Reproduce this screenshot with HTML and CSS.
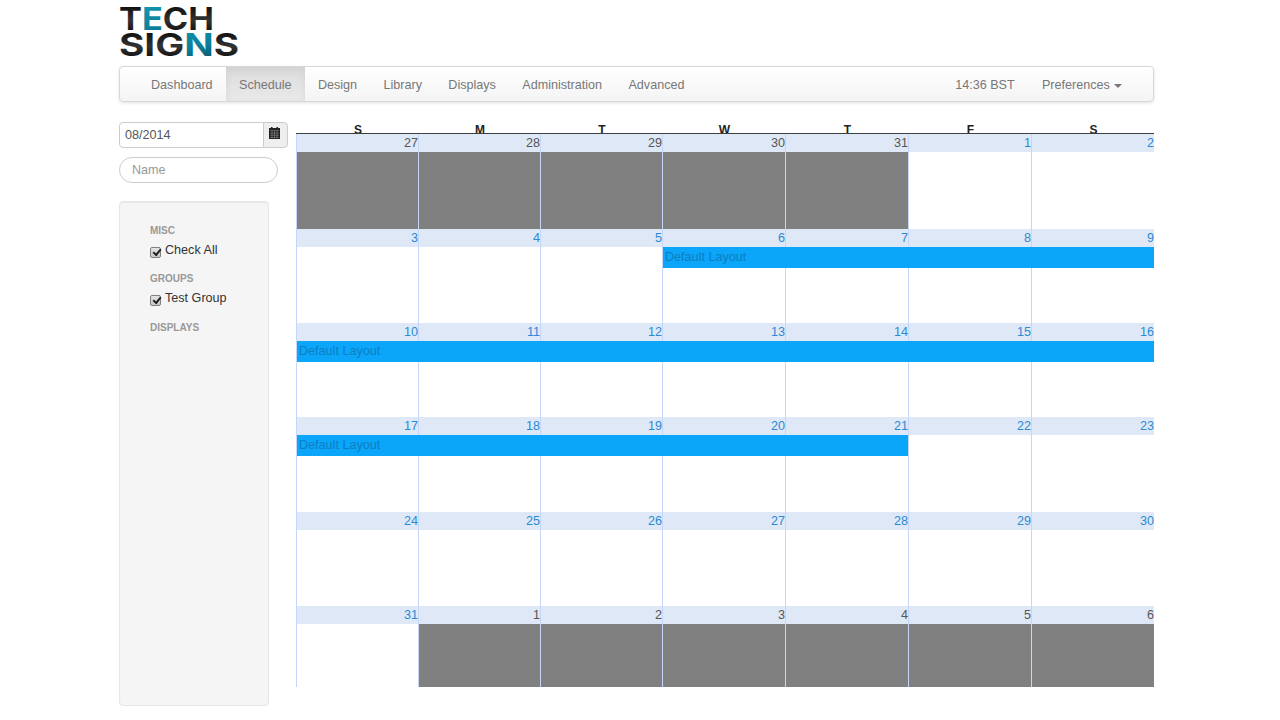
FILE: index.html
```html
<!DOCTYPE html>
<html lang="en">
<head>
<meta charset="utf-8">
<title>Schedule</title>
<link rel="stylesheet" href="styles.css">
</head>
<body>
<div class="page">
  <header class="brand">
    <svg class="logo" width="122" height="52" viewBox="0 0 122 52" role="img" aria-label="Tech Signs">
      <defs>
        <linearGradient id="dark" x1="0" y1="0" x2="0" y2="1"><stop offset="0" stop-color="#000"/><stop offset="0.55" stop-color="#333"/><stop offset="1" stop-color="#000"/></linearGradient>
        <linearGradient id="teal" x1="0" y1="0" x2="1" y2="1"><stop offset="0" stop-color="#12a3bd"/><stop offset="0.6" stop-color="#0d7f99"/><stop offset="1" stop-color="#0b3a4a"/></linearGradient>
      </defs>
      <text class="logo-text" x="0" y="23" textLength="95" lengthAdjust="spacingAndGlyphs" fill="url(#dark)">T<tspan fill="url(#teal)">E</tspan>CH</text>
      <text class="logo-text" x="0" y="49" textLength="120" lengthAdjust="spacingAndGlyphs" fill="url(#dark)">SIG<tspan fill="url(#teal)">N</tspan>S</text>
    </svg>
  </header>

  <nav class="navbar">
    <ul class="nav">
      <li>Dashboard</li>
      <li class="active">Schedule</li>
      <li>Design</li>
      <li>Library</li>
      <li>Displays</li>
      <li>Administration</li>
      <li>Advanced</li>
    </ul>
    <ul class="nav nav-right">
      <li>14:36 BST</li>
      <li>Preferences <span class="caret"></span></li>
    </ul>
  </nav>

  <main class="content">
    <aside class="sidebar">
      <div class="input-group">
        <input class="date-input" type="text" value="08/2014">
        <span class="addon">
          <svg width="11" height="12" viewBox="0 0 11 12" aria-hidden="true">
            <path class="cal-icon" d="M2 0h1.500v1h4V0H9v1h2v11H0V1h2z"/>
            <path class="cal-grid" d="M1 3.500h9M1 6h9M1 8.250h9M1 10.500h9M3 3.500V11M5.500 3.500V11M8 3.500V11"/>
          </svg>
        </span>
      </div>
      <input class="name-input" type="text" placeholder="Name">
      <section class="filter-panel">
        <h5>Misc</h5>
        <label class="check"><input type="checkbox" checked> Check All</label>
        <h5>Groups</h5>
        <label class="check"><input type="checkbox" checked> Test Group</label>
        <h5 class="displays">Displays</h5>
      </section>
    </aside>

    <section class="calendar">
      <div class="weekdays"><span>S</span><span>M</span><span>T</span><span>W</span><span>T</span><span>F</span><span>S</span></div>

      <div class="week tall">
        <div class="days">
          <div class="day other"><b>27</b></div><div class="day other"><b>28</b></div><div class="day other"><b>29</b></div><div class="day other"><b>30</b></div><div class="day other"><b>31</b></div><div class="day"><b>1</b></div><div class="day"><b>2</b></div>
        </div>
      </div>

      <div class="week">
        <div class="days">
          <div class="day"><b>3</b></div><div class="day"><b>4</b></div><div class="day"><b>5</b></div><div class="day"><b>6</b></div><div class="day"><b>7</b></div><div class="day"><b>8</b></div><div class="day"><b>9</b></div>
        </div>
        <div class="bars"><div class="bar from-4">Default Layout</div></div>
      </div>

      <div class="week">
        <div class="days">
          <div class="day"><b>10</b></div><div class="day"><b>11</b></div><div class="day"><b>12</b></div><div class="day"><b>13</b></div><div class="day"><b>14</b></div><div class="day"><b>15</b></div><div class="day"><b>16</b></div>
        </div>
        <div class="bars"><div class="bar all">Default Layout</div></div>
      </div>

      <div class="week tall">
        <div class="days">
          <div class="day"><b>17</b></div><div class="day"><b>18</b></div><div class="day"><b>19</b></div><div class="day"><b>20</b></div><div class="day"><b>21</b></div><div class="day"><b>22</b></div><div class="day"><b>23</b></div>
        </div>
        <div class="bars"><div class="bar to-5">Default Layout</div></div>
      </div>

      <div class="week">
        <div class="days">
          <div class="day"><b>24</b></div><div class="day"><b>25</b></div><div class="day"><b>26</b></div><div class="day"><b>27</b></div><div class="day"><b>28</b></div><div class="day"><b>29</b></div><div class="day"><b>30</b></div>
        </div>
      </div>

      <div class="week last">
        <div class="days">
          <div class="day"><b>31</b></div><div class="day other"><b>1</b></div><div class="day other"><b>2</b></div><div class="day other"><b>3</b></div><div class="day other"><b>4</b></div><div class="day other"><b>5</b></div><div class="day other"><b>6</b></div>
        </div>
      </div>
    </section>
  </main>
</div>
</body>
</html>
```

FILE: styles.css
```css
* { box-sizing: border-box; }

html, body { margin: 0; height: 100%; overflow: hidden; }

body {
  background: #fff;
  color: #333;
  font-family: "Liberation Sans", Arial, sans-serif;
  font-size: 12.6px;
  line-height: 1.43;
}

.page { width: 1035px; margin-left: 119px; }

.brand { height: 66px; padding-top: 7px; }
.logo { display: block; overflow: visible; }
.logo-text { font-family: Inter, "Liberation Sans", sans-serif; font-weight: 700; font-size: 31px; }

.navbar {
  display: flex;
  justify-content: space-between;
  height: 36px;
  padding: 0 19px 0 17.8px;
  border: 1px solid #d8d8d8;
  border-radius: 4px;
  background: linear-gradient(to bottom, #fff, #f4f4f4);
  box-shadow: 0 1px 3px rgba(0, 0, 0, .12);
}

.nav { display: flex; margin: 0; padding: 0; list-style: none; }
.nav li { padding: 9px 13.2px 0; color: #777; }
.nav .active {
  background: linear-gradient(to bottom, #dcdcdc, #e9e9e9);
  box-shadow: inset 0 3px 9px rgba(0, 0, 0, .06);
}
.nav-right { margin-right: -1.500px; }
.nav-right li:first-child { padding-right: 14px; }

.caret {
  display: inline-block;
  margin-left: 1px;
  vertical-align: middle;
  border-top: 4px solid #777;
  border-left: 4px solid transparent;
  border-right: 4px solid transparent;
}

.content { display: flex; align-items: flex-start; margin-top: 19px; }

.sidebar { flex: 0 0 177px; padding-top: 1px; }

.input-group { display: flex; width: 169px; height: 26px; }
.date-input {
  flex: 1;
  min-width: 0;
  height: 26px;
  padding: 0 5px;
  border: 1px solid #ccc;
  border-radius: 4px 0 0 4px;
  color: #555;
  font: 12.6px "Liberation Sans", Arial, sans-serif;
}
.addon {
  display: flex;
  align-items: center;
  justify-content: center;
  width: 25px;
  margin-left: -1px;
  border: 1px solid #ccc;
  border-radius: 0 4px 4px 0;
  background: #eee;
}
.addon svg { margin: 0 2px 4px 0; }
.cal-icon { fill: #222; }
.cal-grid { fill: none; stroke: #999; stroke-width: .5; }

.name-input {
  display: block;
  width: 159px;
  height: 26px;
  margin-top: 9px;
  padding: 0 12px;
  border: 1px solid #ccc;
  border-radius: 13px;
  font: 12.6px "Liberation Sans", Arial, sans-serif;
}
.name-input::placeholder { color: #999; opacity: 1; }

.filter-panel {
  width: 150px;
  height: 505px;
  margin-top: 18px;
  padding: 22px 30px;
  border: 1px solid #e6e6e6;
  border-radius: 4px;
  background: #f5f5f5;
  box-shadow: inset 0 1px 1px rgba(0, 0, 0, .05);
}
.filter-panel h5 {
  margin: 0;
  height: 14px;
  color: #999;
  font-size: 10px;
  font-weight: 700;
  line-height: 14px;
  text-transform: uppercase;
}
.filter-panel .displays { margin-top: 1px; }
.check {
  display: flex;
  align-items: flex-start;
  height: 34px;
  padding-top: 3px;
  color: #333;
  line-height: 18px;
}
.check input {
  appearance: none;
  position: relative;
  flex: none;
  width: 11px;
  height: 11px;
  margin: 6px 4px 0 0;
  border: 1px solid #808080;
  border-radius: 2px;
  background: linear-gradient(to bottom, #e4e4e4, #c8c8c8);
}
.check input::after {
  content: "";
  position: absolute;
  left: 2px;
  top: 1px;
  width: 6px;
  height: 3px;
  border-left: 2px solid #222;
  border-bottom: 2px solid #222;
  transform: rotate(-50deg);
}

.calendar { width: 858px; }

.weekdays {
  display: grid;
  grid-template-columns: repeat(3, 122px) repeat(4, 123px);
  height: 13px;
  padding: 2px 0 0 1px;
  overflow: hidden;
  border-bottom: 1px solid #3f3f3f;
  color: #222;
  font-size: 12px;
  font-weight: 700;
  line-height: 14px;
  text-align: center;
}

.week { display: grid; height: 94px; overflow: hidden; }
.week.tall { height: 95px; }
.week.last { height: 81px; }

.days, .bars {
  grid-area: 1 / 1;
  display: grid;
  grid-template-columns: repeat(3, 122px) repeat(4, 123px);
}

.day {
  display: flex;
  flex-direction: column;
  border-left: 1px solid #c4d7fa;
  background: #fff;
}
.day b {
  display: block;
  height: 18px;
  background: #dfe8f6;
  color: #2a8ad4;
  font-weight: 400;
  line-height: 18px;
  text-align: right;
}
.day.other { background: #808080; }
.day.other b { color: #555; }

.bars { align-content: start; padding-top: 18px; }
.bar {
  height: 21px;
  padding-left: 2px;
  background: #0ba5fa;
  color: #0d7fc0;
  line-height: 21px;
}
.from-4 { grid-column: 4 / 8; margin-left: 1px; }
.all { grid-column: 1 / 8; margin-left: 1px; }
.to-5 { grid-column: 1 / 6; margin-left: 1px; }
```
